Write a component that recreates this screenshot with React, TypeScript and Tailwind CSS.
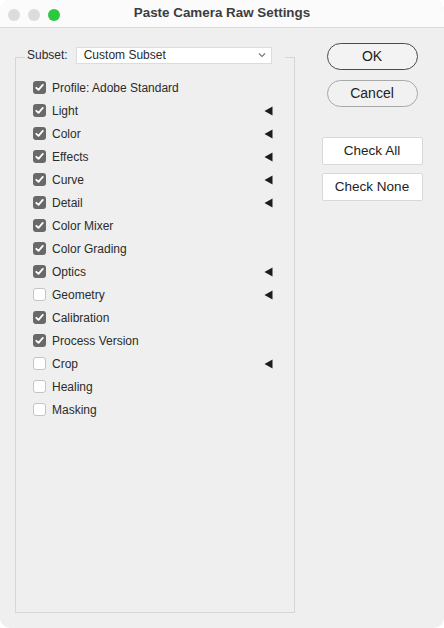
import React from "react";

type Item = { label: string; checked: boolean; arrow?: boolean };

const items: Item[] = [
  { label: "Profile: Adobe Standard", checked: true },
  { label: "Light", checked: true, arrow: true },
  { label: "Color", checked: true, arrow: true },
  { label: "Effects", checked: true, arrow: true },
  { label: "Curve", checked: true, arrow: true },
  { label: "Detail", checked: true, arrow: true },
  { label: "Color Mixer", checked: true },
  { label: "Color Grading", checked: true },
  { label: "Optics", checked: true, arrow: true },
  { label: "Geometry", checked: false, arrow: true },
  { label: "Calibration", checked: true },
  { label: "Process Version", checked: true },
  { label: "Crop", checked: false, arrow: true },
  { label: "Healing", checked: false },
  { label: "Masking", checked: false },
];

function Checkbox({ checked }: { checked: boolean }) {
  if (checked) {
    return (
      <span className="flex h-[13px] w-[13px] items-center justify-center rounded-[3px] bg-[#696969]">
        <svg width="9" height="9" viewBox="0 0 9 9">
          <path d="M1.3 4.8 L3.5 6.9 L7.8 1.9" fill="none" stroke="#ffffff" strokeWidth="1.8" strokeLinecap="round" strokeLinejoin="round" />
        </svg>
      </span>
    );
  }
  return <span className="block h-[13px] w-[13px] rounded-[3px] border border-[#c4c4c4] bg-white" />;
}

export default function App() {
  return (
    <div className="h-[628px] w-[444px] bg-white" style={{ fontFamily: '"Liberation Sans", Arial, sans-serif' }}>
      <div className="flex h-full w-full flex-col overflow-hidden rounded-[10px] bg-[#efefef]">
        <div className="relative flex h-[28px] shrink-0 items-center justify-center border-b border-[#dadada] bg-[#fbfbfb]">
          <div className="absolute left-[8px] top-[8.5px] flex gap-[8px]">
            <span className="block h-[12px] w-[12px] rounded-full bg-[#dcdcdc]" />
            <span className="block h-[12px] w-[12px] rounded-full bg-[#dcdcdc]" />
            <span className="block h-[12px] w-[12px] rounded-full bg-[#2bc840]" />
          </div>
          <span className="text-[13.4px] font-bold text-[#3d3d3d]">Paste Camera Raw Settings</span>
        </div>
        <div className="flex flex-1 pt-[15px]">
          <fieldset className="ml-[15px] mt-[3px] h-[567px] w-[280px] min-w-0 shrink-0 border border-[#d6d6d6] pl-[17px] pr-0">
            <legend className="ml-[-8px] flex items-center gap-[8px] px-[2px] pb-[4px]">
              <span className="text-[12px] text-[#2b2b2b]">Subset:</span>
              <span className="flex h-[17px] w-[196px] items-center justify-between border border-[#dcdcdc] bg-white pl-[7px] pr-[5px] text-[12px] text-[#2b2b2b]">
                Custom Subset
                <svg width="8" height="6" viewBox="0 0 8 6">
                  <path d="M1 1.5 L4 4.5 L7 1.5" fill="none" stroke="#777" strokeWidth="1.1" />
                </svg>
              </span>
              <span className="w-[3px]" />
            </legend>
            <div className="flex flex-col pr-[21px] pt-[8px]">
              {items.map((it) => (
                <div key={it.label} className="flex h-[23px] items-center">
                  <Checkbox checked={it.checked} />
                  <span className="ml-[6px] flex-1 text-[12px] text-[#2b2b2b]">{it.label}</span>
                  {it.arrow && (
                    <svg width="9" height="10" viewBox="0 0 9 10">
                      <path d="M0.5 5 L8.5 0.5 L8.5 9.5 Z" fill="#1c1c1c" />
                    </svg>
                  )}
                </div>
              ))}
            </div>
          </fieldset>
          <div className="ml-[26px] flex w-[102px] flex-col items-center">
            <button className="h-[27px] w-[91px] rounded-full border-[1.5px] border-[#4a4a4a] bg-[#f3f3f3] text-[14px] text-[#222]">
              OK
            </button>
            <button className="mt-[10px] h-[27px] w-[91px] rounded-full border border-[#a8a8a8] bg-[#f1f1f1] text-[14px] text-[#222]">
              Cancel
            </button>
            <button className="mt-[30px] h-[28px] w-[101px] rounded-[2px] border border-[#d8d8d8] bg-white text-[13.5px] text-[#222]">
              Check All
            </button>
            <button className="mt-[8px] h-[28px] w-[101px] rounded-[2px] border border-[#d8d8d8] bg-white text-[13.5px] text-[#222]">
              Check None
            </button>
          </div>
        </div>
      </div>
    </div>
  );
}
